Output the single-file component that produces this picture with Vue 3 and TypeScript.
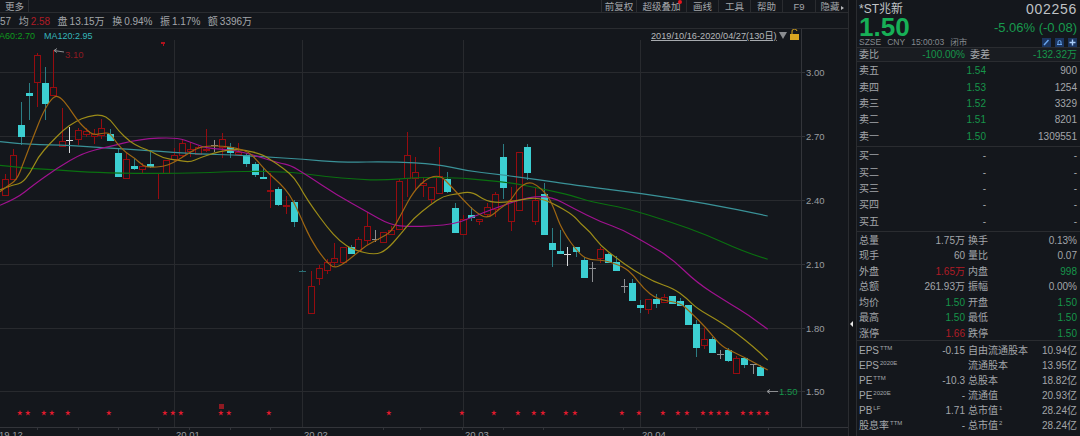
<script setup lang="ts">
type Pt = [number, number]
type Kind = 'r' | 'c' | 'w' | 'g' | 'd'
type Candle = [number, number, number, number, number, Kind]

const z = (ox: number, oy: number, a: number[]): Pt[] => {
  const out: Pt[] = []
  for (let i = 0; i < a.length; i += 2) out.push([ox + a[i] / 3, oy + a[i + 1] / 3])
  return out
}
const smooth = (p: Pt[]): string => {
  let d = `M${p[0][0].toFixed(1)} ${p[0][1].toFixed(1)}`
  for (let i = 1; i < p.length - 1; i++) {
    const mx = (p[i][0] + p[i + 1][0]) / 2
    const my = (p[i][1] + p[i + 1][1]) / 2
    d += `Q${p[i][0].toFixed(1)} ${p[i][1].toFixed(1)} ${mx.toFixed(1)} ${my.toFixed(1)}`
  }
  const l = p[p.length - 1]
  return d + `L${l[0].toFixed(1)} ${l[1].toFixed(1)}`
}

const candles: Candle[] = [
  [5,179,195,174,195,'r'],[13,155,179,149,179,'r'],[21,125,136,102,145,'c'],[29,93,95,83,120,'c'],
  [37,55,82,53,107,'r'],[45,83,103,67,120,'c'],[53,87,95,50,95,'r'],[62,141,146,108,146,'r'],
  [69,140,140,127,153,'w'],[78,130,139,128,145,'r'],[86,131,134,128,137,'r'],[94,134,136,129,144,'r'],
  [101,128,135,119,139,'r'],[110,134,140,129,141,'c'],[118,153,176,148,177,'c'],[126,159,178,153,178,'r'],
  [134,166,168,159,170,'c'],[142,166,169,163,173,'r'],[150,164,166,152,168,'c'],[158,173,173,173,199,'r'],
  [166,160,173,160,173,'r'],[174,155,159,148,161,'r'],[182,143,155,140,157,'r'],[190,149,151,142,157,'r'],
  [198,147,154,146,155,'r'],[206,149,150,129,152,'r'],[214,145,145,140,152,'g'],[222,139,147,133,158,'r'],
  [230,147,152,143,158,'c'],[238,152,154,143,155,'r'],[246,155,163,153,167,'c'],[255,164,174,162,177,'c'],
  [263,177,178,168,178,'c'],[270,190,191,173,208,'r'],[278,189,204,187,206,'c'],[286,205,206,196,214,'r'],
  [294,202,221,200,227,'c'],[302,271,271,270,272,'d'],[311,286,313,271,313,'r'],[319,268,278,265,285,'r'],
  [327,262,270,259,274,'r'],[334,258,262,243,266,'r'],[343,247,262,247,262,'r'],[351,247,253,245,254,'c'],
  [358,239,250,237,251,'r'],[367,226,240,212,245,'r'],[375,239,239,230,242,'g'],[383,232,242,232,243,'r'],
  [391,230,234,226,235,'r'],[399,181,229,179,230,'r'],[407,155,178,132,197,'r'],[415,172,178,157,191,'r'],
  [423,183,185,177,197,'r'],[431,187,199,187,203,'r'],[439,176,193,147,193,'r'],[447,179,191,172,193,'c'],
  [455,208,232,203,233,'c'],[463,219,234,215,235,'r'],[471,215,217,207,221,'c'],[479,219,221,219,225,'r'],
  [487,207,214,203,217,'r'],[495,194,209,192,217,'r'],[503,157,187,144,199,'c'],[511,200,221,187,231,'r'],
  [519,152,210,152,210,'r'],[527,147,172,144,180,'c'],[535,200,221,188,225,'r'],[544,194,234,183,234,'c'],
  [552,243,249,228,267,'c'],[560,251,253,230,253,'c'],[567,254,254,247,266,'w'],[576,247,251,247,257,'c'],
  [584,260,277,257,278,'c'],[592,268,268,262,282,'g'],[600,249,258,247,263,'r'],[608,254,262,253,263,'c'],
  [616,262,270,256,271,'c'],[624,286,286,279,293,'g'],[632,283,300,279,300,'c'],[640,305,307,300,313,'c'],
  [648,299,309,299,314,'r'],[656,299,303,294,308,'c'],[664,297,302,294,302,'r'],[672,296,303,296,304,'c'],
  [680,301,305,298,306,'c'],[688,305,324,305,325,'c'],[696,324,347,320,357,'c'],[704,339,345,328,349,'r'],
  [712,339,352,337,353,'c'],[720,354,354,350,359,'g'],[728,350,360,348,362,'c'],[736,358,373,356,373,'r'],
  [744,358,364,357,368,'c'],[753,364,364,364,374,'g'],[760,367,375,365,375,'c'],
]
const rc = (c: Candle): string => `k-${c[5]}`

const ma5 = smooth([
  ...z(0,40,[0,455,20,440,50,420,70,370,100,290,130,215,160,168,180,170,205,200,235,245,260,270,280,285,305,280,330,278,350,310,380,340,405,355,430,378,450,382,490,380,520,368,550,350,590,325,620,318,670,318,710,325,745,335,770,360,800,395]),
  ...z(270,120,[30,190,60,225,85,275,120,355,160,415,190,445,220,432,260,400,290,375,330,355,365,335,395,280,430,215,470,175,510,165,540,195,580,240,620,280,655,296,690,265,720,245,745,205,775,185,800,195,830,222,850,260,875,330]),
  ...z(540,180,[120,225,150,240,190,240,250,260,280,285,310,325,350,358,420,368,450,395,500,445,540,495,570,512,620,535,683,570]),
])
const ma10 = smooth([
  ...z(0,40,[0,450,30,437,65,430,90,400,115,350,150,310,190,270,225,245,265,228,305,224,330,238,355,272,390,305,420,322,450,332,490,355,530,360,570,367,600,353,640,340,680,330,730,328,790,345]),
  ...z(270,120,[0,118,40,145,75,175,100,220,130,265,170,320,210,365,250,390,315,405,350,390,390,345,430,295,480,255,520,228,560,222,605,214,650,245,700,248,750,240,800,232,850,250]),
  ...z(540,180,[100,105,120,130,150,155,180,195,230,235,280,270,340,305,400,325,440,355,470,385,540,425,590,460,640,500,683,540]),
])
const ma20 = smooth([
  ...z(0,40,[0,496,50,475,100,435,170,385,250,338,320,322,420,297,530,292,580,310,620,325,700,330,760,345,840,370]),
  ...z(270,120,[60,135,110,165,200,225,290,275,360,315,420,320,490,318,550,312,600,295,680,262,780,230,845,230]),
  ...z(540,180,[100,85,180,125,250,150,320,190,395,235,470,308,560,365,630,408,683,448]),
])
const ma60 = smooth([
  ...z(0,40,[0,376,80,385,180,390,260,397,400,400,580,400,680,395,790,394]),
  ...z(270,120,[0,155,70,157,170,170,260,178,340,181,440,172,560,173,640,180,720,188,810,205]),
  ...z(540,180,[100,48,150,65,260,85,390,125,500,165,600,210,683,238]),
])
const ma120 = smooth([
  ...z(0,40,[0,305,60,313,180,315,320,323,440,332,600,342,700,345,790,350]),
  ...z(270,120,[100,118,210,127,370,125,500,132,590,152,680,163,800,178]),
  ...z(540,180,[100,15,300,40,500,70,683,108]),
])

const gridY = [72, 136, 200, 264, 328, 391]
const gridX = [174, 302, 463, 640]
const prices = [['3.00', 72], ['2.70', 136], ['2.40', 200], ['2.10', 264], ['1.80', 328], ['1.50', 391]] as const
const ticks = [37, 78, 118, 158, 189, 230, 270, 383, 420, 462, 503, 543, 623, 696, 768]
const dates = [['19.12', -1], ['20.01', 176], ['20.02', 304], ['20.03', 465], ['20.04', 642]] as const
const starX = [20,28,44,52,68,109,165,173,181,221,229,269,389,462,494,518,534,543,566,575,622,639,663,678,687,703,711,719,727,743,751,759,767]
const starPath = (x: number, y = 413): string => {
  let d = ''
  for (let i = 0; i < 10; i++) {
    const r = i % 2 ? 1.2 : 3
    const a = -Math.PI / 2 + (i * Math.PI) / 5
    d += `${i ? 'L' : 'M'}${(x + r * Math.cos(a)).toFixed(2)} ${(y + r * Math.sin(a)).toFixed(2)}`
  }
  return d + 'Z'
}

const tools = [
  { t: '前复权', w: 35 }, { t: '超级叠加', w: 50, dot: true }, { t: '画线', w: 32 }, { t: '工具', w: 32 },
  { t: '帮助', w: 32 }, { t: 'F9', w: 33 }, { t: '隐藏', w: 33, arrow: true },
]
const quote = [
  { l: '', v: '57' }, { l: '均', v: '2.58', c: 'red' }, { l: '盘', v: '13.15万' }, { l: '换', v: '0.94%' },
  { l: '振', v: '1.17%' }, { l: '额', v: '3396万' },
]
const sells = [['卖五','1.54','900'],['卖四','1.53','1254'],['卖三','1.52','3329'],['卖二','1.51','8201'],['卖一','1.50','1309551']]
const buys = ['买一','买二','买三','买四','买五']
const stats = [
  ['总量','1.75万','','换手','0.13%',''],['现手','60','','量比','0.07',''],['外盘','1.65万','red','内盘','998','green'],
  ['总额','261.93万','','振幅','0.00%',''],['均价','1.50','green','开盘','1.50','green'],['最高','1.50','green','最低','1.50','green'],
  ['涨停','1.66','red','跌停','1.50','green'],
]
const funds = [
  ['EPS','TTM','-0.15','自由流通股本','','10.94亿'],['EPS','2020E','','流通股本','','13.95亿'],['PE','TTM','-10.3','总股本','','18.82亿'],
  ['PE','2020E','-','流通值','','20.93亿'],['PB','LF','1.71','总市值','1','28.24亿'],['股息率','TTM','-','总市值','2','28.24亿'],
]
</script>

<template>
  <div class="page">
    <div class="main">
      <div class="toolbar">
        <span class="more">更多</span>
        <div class="tools">
          <span v-for="t in tools" :key="t.t" class="tool" :class="{ w35: t.w === 35, w50: t.w === 50, w32: t.w === 32, w33: t.w === 33 }">
            {{ t.t }}<i v-if="t.dot" class="dot"></i><i v-if="t.arrow" class="arr"></i>
          </span>
        </div>
      </div>
      <div class="quote">
        <span v-for="q in quote" :key="q.v"><b v-if="q.l">{{ q.l }}</b><em :class="q.c">{{ q.v }}</em></span>
      </div>
      <svg class="chart" width="848" height="407" viewBox="0 29 848 407">
        <g class="grid" shape-rendering="crispEdges">
          <line v-for="y in gridY" :key="y" x1="0" x2="802" :y1="y" :y2="y" />
          <line v-for="x in gridX" :key="x" :x1="x" :x2="x" y1="40" y2="427" />
          <line class="axis" x1="801" x2="801" y1="29" y2="427" />
          <line class="axis" x1="0" x2="848" y1="427" y2="427" />
          <line v-for="y in gridY" :key="'t' + y" class="axis" x1="801" x2="805" :y1="y" :y2="y" />
          <line v-for="x in ticks" :key="'k' + x" class="axis" :x1="x" :x2="x" y1="427" y2="430" />
        </g>
        <g shape-rendering="crispEdges">
          <g v-for="c in candles" :key="c[0]" :class="rc(c)">
            <line class="wick" :x1="c[0]" :x2="c[0]" :y1="c[3]" :y2="c[4]" />
            <line v-if="c[1] === c[2]" class="doji" :x1="c[0] - 3.5" :x2="c[0] + 3.5" :y1="c[1]" :y2="c[1]" />
            <rect v-else class="body" :x="c[0] - 3" :y="c[1]" width="6" :height="c[2] - c[1]" />
          </g>
        </g>
        <g fill="none" stroke-width="1.2" stroke-linejoin="round">
          <path :d="ma120" stroke="#3a9298" />
          <path :d="ma60" stroke="#0a7010" />
          <path :d="ma20" stroke="#a0128f" />
          <path :d="ma10" stroke="#9c8c18" />
          <path :d="ma5" stroke="#9e6612" />
        </g>
        <path class="mark" d="M161 42h4v2h-1v2h-1v-2h-2z" />
        <path class="hint" d="M64 52 54 50.5M54 50.5l3-2M54 50.5l3 2" />
        <text class="red-t" x="65" y="58">3.10</text>
        <text class="leg-g" x="-1" y="39">A60:2.70</text>
        <text class="leg-t" x="44" y="39">MA120:2.95</text>
        <text class="date" x="651" y="39">2019/10/16-2020/04/27(130日)</text>
        <path class="tri" d="M779 32h8l-4 7z" />
        <g class="lock">
          <rect x="790" y="34" width="9" height="6" />
          <path d="M792 34v-2a2.500 2.500 0 0 1 5-1" />
        </g>
        <text v-for="p in prices" :key="p[0]" class="price" x="806" :y="p[1] + 3.500">{{ p[0] }}</text>
        <path class="hint" d="M778 391.500H767M767 391.500l3-2M767 391.500l3 2" />
        <text class="green-t" x="779" y="395">1.50</text>
        <path v-for="x in starX" :key="x" class="star" :d="starPath(x)" />
        <rect class="rbox" x="219" y="404" width="5" height="5" />
        <text v-for="d in dates" :key="d[0]" class="price" :x="d[1]" y="438">{{ d[0] }}</text>
      </svg>
    </div>

    <div class="gutter"><i class="pin"></i></div>

    <aside class="panel">
      <header class="head">
        <div class="h1"><span class="name">*ST兆新</span><span class="code">002256</span></div>
        <div class="h2"><span class="big">1.50</span><span class="pct">-5.06% (-0.08)</span></div>
        <div class="h3">
          <span>SZSE</span><span>CNY</span><span>15:00:03</span><span>闭市</span>
          <span class="icons">
            <svg width="9" height="9" viewBox="0 0 9 9"><rect width="9" height="9" fill="#1b3560"/><path d="M2 7 6.500 2" stroke="#6aa6ee" stroke-width="1.400"/></svg>
            <svg width="9" height="9" viewBox="0 0 9 9"><rect width="9" height="9" fill="#1b3560"/><path d="M2 6.500h5M3 6.500V4a1.500 1.500 0 0 1 3 0v2.500" fill="none" stroke="#6aa6ee"/></svg>
            <svg width="9" height="9" viewBox="0 0 9 9"><rect width="9" height="9" fill="#1b3560"/><path d="M4.500 1.500v6M1.500 4.500h6" stroke="#a9cdf8" stroke-width="1.400"/></svg>
          </span>
        </div>
      </header>
      <div class="wei">
        <div class="cell"><span>委比</span><em class="green">-100.00%</em></div>
        <div class="cell"><span>委差</span><em class="green">-132.32万</em></div>
      </div>
      <section class="book sell">
        <div v-for="s in sells" :key="s[0]" class="brow">
          <div class="cell"><span>{{ s[0] }}</span><em class="green">{{ s[1] }}</em></div>
          <em class="vol">{{ s[2] }}</em>
        </div>
      </section>
      <section class="book">
        <div v-for="b in buys" :key="b" class="brow">
          <div class="cell"><span>{{ b }}</span><em>-</em></div>
          <em class="vol">-</em>
        </div>
      </section>
      <section class="stats">
        <div v-for="s in stats" :key="s[0]" class="srow">
          <div class="cell"><span>{{ s[0] }}</span><em :class="s[2]">{{ s[1] }}</em></div>
          <div class="cell"><span>{{ s[3] }}</span><em :class="s[5]">{{ s[4] }}</em></div>
        </div>
      </section>
      <section class="funds">
        <div v-for="f in funds" :key="f[3] + f[0] + f[1]" class="frow">
          <div class="cell"><span>{{ f[0] }}<sup>{{ f[1] }}</sup></span><em>{{ f[2] }}</em></div>
          <div class="cell"><span>{{ f[3] }}<sup v-if="f[4]">{{ f[4] }}</sup></span><em>{{ f[5] }}</em></div>
        </div>
      </section>
    </aside>
  </div>
</template>

<style>
html, body { margin: 0; background: #14171c; overflow: hidden; }
</style>

<style scoped>
.page {
  display: flex; width: 1080px; height: 436px; overflow: hidden; background: #14171c;
  font: 10px/1 "Liberation Sans", "Noto Sans CJK SC", sans-serif; color: #a3a6aa;
}
em { font-style: normal; }
b { font-weight: 400; }
.main { width: 848px; flex: none; display: flex; flex-direction: column; }
.toolbar { height: 13px; flex: none; display: flex; justify-content: space-between; border-bottom: 1px solid #2a2c30; box-sizing: border-box; font-size: 9.500px; overflow: hidden; }
.more { width: 29px; box-sizing: border-box; padding: 2px 0 0 5px; border-right: 1px solid #2a2c30; }
.tools { display: flex; }
.tool { position: relative; box-sizing: border-box; border-left: 1px solid #2a2c30; text-align: center; padding-top: 2px; white-space: nowrap; }
.w35 { width: 35px; } .w50 { width: 50px; } .w32 { width: 32px; } .w33 { width: 33px; }
.dot { position: absolute; right: 4px; top: 0; width: 4px; height: 4px; border-radius: 50%; background: #e8141c; }
.arr { display: inline-block; border-left: 3px solid #b5b7ba; border-top: 2.500px solid transparent; border-bottom: 2.500px solid transparent; margin-left: 1px; }
.quote { height: 16px; flex: none; box-sizing: border-box; padding-top: 1px; display: flex; gap: 7.500px; align-items: center; white-space: nowrap; }
.quote b { margin-right: 2px; }
.red { color: #b01c26; }
.green { color: #16954a; }
.chart { display: block; flex: none; border-top: 1px solid #2a2c30; font: 9.500px "Liberation Sans", "Noto Sans CJK SC", sans-serif; margin-top: -1px; }
.grid line { stroke: #282a2e; stroke-width: 1; }
.grid .axis { stroke: #33353a; }
.wick { stroke-width: 1; }
.body { stroke-width: 1; }
.doji { stroke-width: 1; }
.k-r .wick { stroke: #960c10; }
.k-r .doji { stroke: #960c10; }
.k-r .body { stroke: #960c10; fill: #14171c; }
.k-c .wick { stroke: #2b7d84; }
.k-c .doji { stroke: #3ccfd2; }
.k-c .body { stroke: #3ccfd2; fill: #3ccfd2; }
.k-d .wick, .k-d .doji { stroke: #2b6f75; }
.k-w .wick, .k-w .doji { stroke: #d8dadc; }
.k-g .wick, .k-g .doji { stroke: #8d8f92; }
.mark { fill: #b0121c; }
.hint { fill: none; stroke: #8d8f92; stroke-width: 1; }
.red-t { fill: #8f1a22; font-size: 9.500px; }
.leg-g { fill: #0e9a1c; font-size: 9px; }
.leg-t { fill: #35b5ba; font-size: 9px; }
.date { fill: #b5b8bb; text-decoration: underline; font-size: 9.200px; }
.tri { fill: #8a8c8f; }
.lock rect { fill: #d9a521; }
.lock path { fill: none; stroke: #d9a521; stroke-width: 1; }
.price { fill: #9a9da0; }
.green-t { fill: #16954a; font-size: 9.500px; }
.star { fill: #e01a2c; }
.rbox { fill: #8f1a22; }
.gutter { width: 8px; flex: none; position: relative; border-left: 1px solid #2a2c30; box-sizing: border-box; background: #121418; }
.pin { position: absolute; left: 1px; top: 321px; border-right: 3px solid #e6e6e6; border-top: 3px solid transparent; border-bottom: 3px solid transparent; }
.panel { width: 224px; flex: none; box-sizing: border-box; border-left: 1px solid #2a2c30; padding-left: 2px; }
.head { height: 48px; box-sizing: border-box; margin-left: -2px; padding: 0 3px 0 2px; border-bottom: 1px solid #2a2c30; display: grid; grid-template-rows: 17px 20px 10px; }
.h1, .h2 { display: flex; justify-content: space-between; align-items: center; }
.name { font-size: 12px; color: #c2c5c8; }
.code { font-size: 14px; letter-spacing: .7px; color: #bfc2c5; }
.big { font-size: 26px; line-height: 20px; font-weight: 700; color: #17b057; }
.pct { font-size: 13px; color: #189a4e; }
.h3 { display: flex; gap: 6px; font-size: 8.500px; align-items: center; color: #85898e; }
.icons { margin-left: auto; display: flex; gap: 4px; }
.cell { display: flex; justify-content: space-between; align-items: center; white-space: nowrap; }
.wei { height: 14px; box-sizing: border-box; margin-left: -2px; padding: 0 3px 0 2px; border-bottom: 1px solid #2a2c30; background: #191c21; display: grid; grid-template-columns: 106px 1fr; column-gap: 5px; }
.book { height: 85px; box-sizing: border-box; margin-left: -2px; padding: 1px 3px 0 2px; border-bottom: 1px solid #2a2c30; display: grid; grid-auto-rows: 16.400px; }
.brow { display: grid; grid-template-columns: 127px 1fr; align-items: center; }
.vol { text-align: right; }
.stats { height: 109px; box-sizing: border-box; margin-left: -2px; padding: 1px 3px 0 2px; border-bottom: 1px solid #2a2c30; display: grid; grid-auto-rows: 15.500px; }
.srow, .frow { display: grid; grid-template-columns: 106px 1fr; column-gap: 3px; }
.funds { margin-left: -2px; padding: 2px 3px 0 2px; display: grid; grid-auto-rows: 15px; }
sup { font-size: 6px; line-height: 0; vertical-align: 4px; margin-left: 1px; }
</style>
